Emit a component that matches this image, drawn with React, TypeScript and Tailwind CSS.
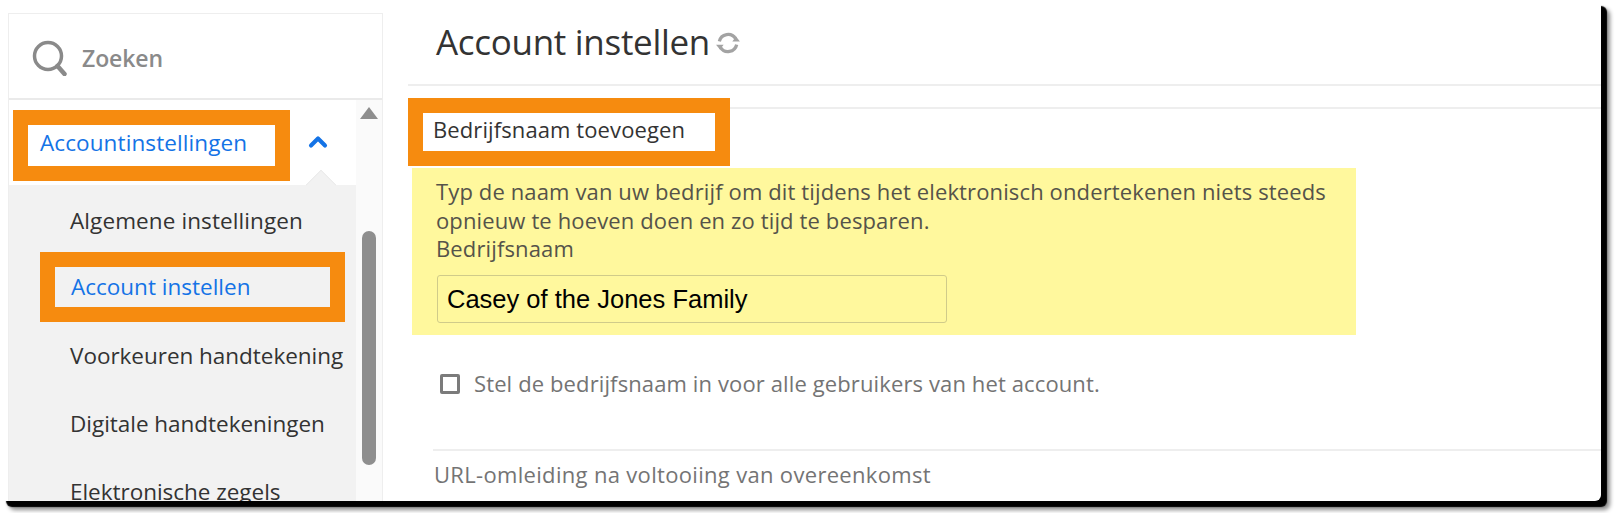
import { ChevronUp } from "lucide-react";

const font = { fontFamily: '"Open Sans", sans-serif' };

const menuItems = ["Voorkeuren handtekening", "Digitale handtekeningen", "Elektronische zegels"];

function Sidebar() {
  return (
    <aside className="flex h-[488px] w-[375px] shrink-0 flex-col border border-b-0 border-[#eeeeee]">
      {/* Search */}
      <div className="flex h-[86px] shrink-0 items-center gap-[14px] border-b-2 border-[#eaeaea] pl-[23px] pt-[4px]">
        <svg viewBox="0 0 36 36" className="h-[36px] w-[36px]" fill="none" stroke="#8a8a8a">
          <circle cx="16" cy="16" r="13.5" strokeWidth="3.5" />
          <path d="M25.5 26l7 8" strokeWidth="4.5" strokeLinecap="round" />
        </svg>
        <span className="text-[23px] font-semibold tracking-[-0.1px] text-[#8a8a8a]">Zoeken</span>
      </div>

      <div className="flex min-h-0 flex-1">
        <div className="flex min-w-0 flex-1 flex-col overflow-hidden">
          {/* Section header */}
          <div className="flex h-[85px] shrink-0 items-start bg-white pl-[4px] pt-[10px]">
            <div className="flex h-[71px] w-[277px] shrink-0 items-center whitespace-nowrap border-[15px] border-[#f68b0f] bg-white pb-[5px] pl-[12px] text-[22.5px] tracking-[0.1px] text-[#1473e6]">
              Accountinstellingen
            </div>
            <ChevronUp className="ml-[14px] mt-[18px] h-[28px] w-[28px] text-[#1473e6]" strokeWidth={3.5} />
          </div>

          {/* Sub menu */}
          <div className="relative flex-1 bg-[#f2f2f2]">
            <div className="absolute -top-[15px] left-[297px] h-[30px] w-[30px] rotate-45 scale-[0.72] border-l border-t border-[#e8e8e8] bg-[#f2f2f2]" />
            <div className="relative flex h-[67px] items-center pl-[61px] pt-[5px] text-[22.5px] tracking-[0.1px] text-[#333333]">
              Algemene instellingen
            </div>
            <div className="relative ml-[31px] flex h-[70px] w-[305px] items-center whitespace-nowrap border-[15px] border-[#f68b0f] pl-[16px] text-[22.5px] text-[#1473e6]">
              Account instellen
            </div>
            {menuItems.map((item) => (
              <div key={item} className="flex h-[68px] items-center whitespace-nowrap pl-[61px] text-[22.5px] tracking-[-0.03px] text-[#333333]">
                {item}
              </div>
            ))}
          </div>
        </div>

        {/* Scrollbar */}
        <div className="flex w-[26px] shrink-0 flex-col items-center bg-[#fafafa] pr-[1px] pt-[7px]">
          <div className="h-0 w-0 border-x-[9px] border-b-[12px] border-x-transparent border-b-[#8e8e8e]" />
          <div className="mt-[112px] h-[234px] w-[14px] rounded-full bg-[#8e8e8e]" />
        </div>
      </div>
    </aside>
  );
}

function MainPanel() {
  return (
    <main className="ml-[25px] min-w-0 flex-1">
      <div className="flex h-[73px] items-center border-b-2 border-[#eeeeee] pb-[12px] pl-[28px]">
        <h1 className="text-[35px] font-normal tracking-[-0.3px] text-[#333333]">Account instellen</h1>
        <svg viewBox="0 0 24 24" className="ml-[5px] mt-[1px] h-[26px] w-[26px]" fill="none" stroke="#a3a3a3" strokeWidth="3">
          <path d="M4 10.5A8.2 8.2 0 0 1 19 8" />
          <path d="M20 13.5A8.2 8.2 0 0 1 5 16" />
          <path d="M23 10.5h-7l3.5-4.5z" fill="#a3a3a3" stroke="none" />
          <path d="M1 13.5h7l-3.5 4.5z" fill="#a3a3a3" stroke="none" />
        </svg>
      </div>

      <div className="mt-[21px] border-t-2 border-[#eeeeee]">
        <div className="-mt-[11px] flex h-[68px] w-[322px] items-center whitespace-nowrap border-[15px] border-[#f68b0f] bg-white pb-[5px] pl-[10px] text-[22px] tracking-[0.1px] text-[#333333]">
          Bedrijfsnaam toevoegen
        </div>

        <div className="ml-[4px] mt-[2px] h-[167px] w-[944px] bg-[#fff89d] pl-[24px] pt-[9px] text-[22px] leading-[29px] tracking-[0.13px] text-[#55534a]">
          <p>Typ de naam van uw bedrijf om dit tijdens het elektronisch ondertekenen niets steeds</p>
          <p>opnieuw te hoeven doen en zo tijd te besparen.</p>
          <p className="-mt-[1px]">Bedrijfsnaam</p>
          <div className="ml-[1px] mt-[12px] flex h-[48px] w-[510px] items-center rounded-[3px] border border-[#d0cb8a] pl-[9px] text-[25.5px] tracking-normal text-black" style={{ fontFamily: '"Liberation Sans", sans-serif' }}>
            Casey of the Jones Family
          </div>
        </div>

        <label className="ml-[32px] mt-[32px] flex items-center text-[22px] tracking-[0.12px] text-[#747474]">
          <span className="h-[20px] w-[20px] rounded-[2px] border-[3px] border-[#7b7b7b] bg-white" />
          <span className="ml-[14px]">Stel de bedrijfsnaam in voor alle gebruikers van het account.</span>
        </label>

        <div className="ml-[25px] mt-[49px] border-t-2 border-[#eeeeee] pl-[1px] pt-[7px] text-[22px] tracking-[0.32px] text-[#747474]">
          URL-omleiding na voltooiing van overeenkomst
        </div>
      </div>
    </main>
  );
}

export default function App() {
  return (
    <div className="h-[513px] w-[1616px] overflow-hidden bg-white" style={font}>
      <div className="h-[501px] w-[1601px] overflow-hidden rounded-[6px] bg-white shadow-[6px_6px_1px_#000000,9px_9px_4px_rgba(0,0,0,0.45)]">
        <div className="flex pl-[8px] pt-[13px]">
          <Sidebar />
          <MainPanel />
        </div>
      </div>
    </div>
  );
}
